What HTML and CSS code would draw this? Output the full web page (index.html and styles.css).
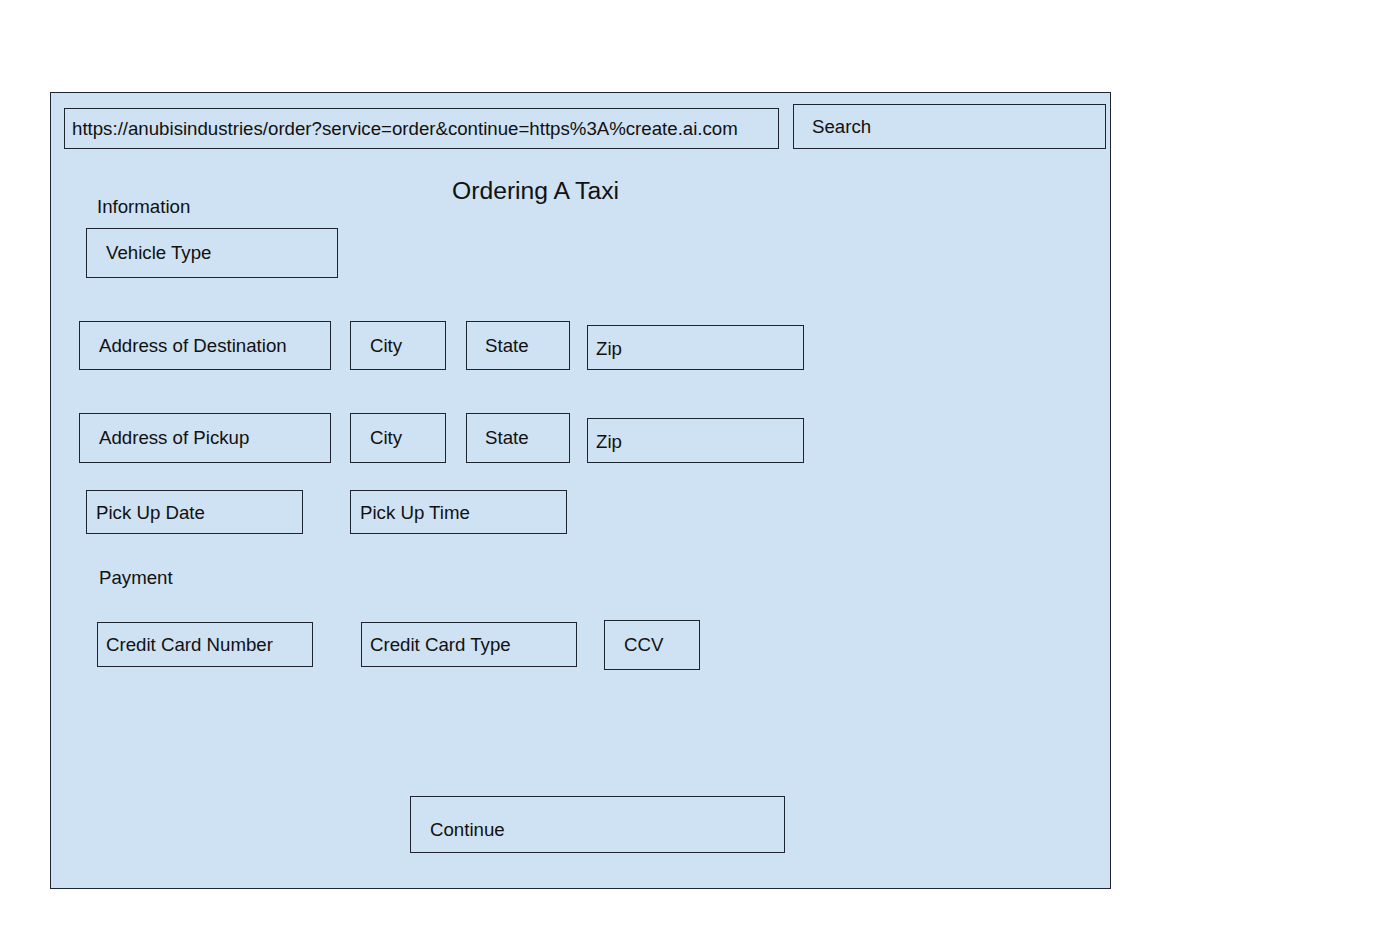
FILE: index.html
```html
<!DOCTYPE html>
<html lang="en">
<head>
<meta charset="utf-8">
<title>Ordering A Taxi</title>
<link rel="stylesheet" href="styles.css">
</head>
<body>
<div class="frame">
  <div class="topbar">
    <div class="box url">https://anubisindustries/order?service=order&amp;continue=https%3A%create.ai.com</div>
    <div class="box search">Search</div>
  </div>
  <div class="header">
    <div class="label info">Information</div>
    <div class="title">Ordering A Taxi</div>
  </div>
  <div class="box vehicle">Vehicle Type</div>
  <div class="row addr first">
    <div class="box address">Address of Destination</div>
    <div class="box city">City</div>
    <div class="box state">State</div>
    <div class="box zip">Zip</div>
  </div>
  <div class="row addr second">
    <div class="box address">Address of Pickup</div>
    <div class="box city">City</div>
    <div class="box state">State</div>
    <div class="box zip">Zip</div>
  </div>
  <div class="row pickup">
    <div class="box pdate">Pick Up Date</div>
    <div class="box ptime">Pick Up Time</div>
  </div>
  <div class="label payment">Payment</div>
  <div class="row pay">
    <div class="box ccn">Credit Card Number</div>
    <div class="box cct">Credit Card Type</div>
    <div class="box ccv">CCV</div>
  </div>
  <div class="box continue">Continue</div>
</div>
</body>
</html>
```

FILE: styles.css
```css
* { box-sizing: border-box; }
html, body { margin: 0; padding: 0; background: #ffffff; }
body {
  font-family: "Liberation Sans", Arial, sans-serif;
  color: #111111;
  font-size: 18.67px;
}
.frame {
  margin: 92px 0 0 50px;
  width: 1061px;
  height: 797px;
  background: #cfe2f3;
  border: 1px solid #1e2430;
  display: flex;
  flex-direction: column;
  align-items: flex-start;
}
.box {
  border: 1px solid #1e2430;
  display: flex;
  align-items: center;
  line-height: 22px;
  white-space: nowrap;
}
.label { line-height: 22px; }

.topbar {
  display: flex;
  align-items: flex-end;
  padding-top: 11px;
  margin-left: 13px;
  gap: 14px;
}
.url { width: 715px; height: 41px; padding-left: 7px; }
.search { width: 313px; height: 45px; padding-left: 18px; }

.header {
  display: grid;
  grid-template-columns: 401px auto;
  align-items: start;
}
.info { padding-left: 46px; margin-top: 47px; }
.title { font-size: 24.7px; line-height: 28px; margin-top: 28px; }

.vehicle { margin: 10px 0 0 35px; width: 252px; height: 50px; padding-left: 19px; }

.row { display: flex; }
.addr { align-items: flex-end; margin-left: 28px; }
.addr.first { margin-top: 43px; }
.addr.second { margin-top: 43px; }
.addr .address { width: 252px; height: 49px; padding-left: 19px; }
.addr .city { width: 96px; height: 49px; padding-left: 19px; margin-left: 19px; }
.addr .state { width: 104px; height: 49px; padding-left: 18px; margin-left: 20px; }
.addr .zip { width: 217px; height: 45px; padding-left: 8px; margin-left: 17px; padding-top: 2px; }
.addr.second .address,
.addr.second .city,
.addr.second .state { height: 50px; }

.pickup { margin: 27px 0 0 35px; gap: 47px; }
.pdate, .ptime { width: 217px; height: 44px; padding-left: 9px; padding-top: 2px; }

.payment { margin: 33px 0 0 48px; }

.pay { margin: 31px 0 0 46px; align-items: flex-start; }
.ccn { width: 216px; height: 45px; padding-left: 8px; margin-top: 2px; }
.cct { width: 216px; height: 45px; padding-left: 8px; margin-left: 48px; margin-top: 2px; }
.ccv { width: 96px; height: 50px; padding-left: 19px; margin-left: 27px; }

.continue { margin: 126px 0 0 359px; width: 375px; height: 57px; padding-left: 19px; padding-top: 10px; }
```
